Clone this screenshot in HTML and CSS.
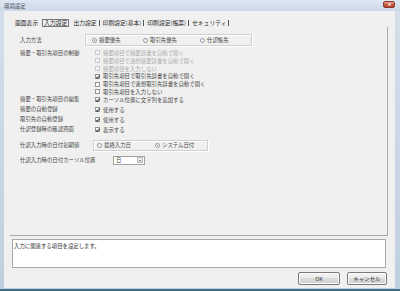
FILE: index.html
```html
<!DOCTYPE html>
<html lang="ja">
<head>
    <meta charset="UTF-8">
    <title>環境設定</title>
    <link rel="stylesheet" href="styles.css">
</head>
<body>
    <div class="window">
        <div class="titlebar">
            <span class="title">環境設定</span>
            <span class="close"></span>
        </div>
        <div class="client">
            <div class="tabs">
                <span class="tab first">画面表示</span>
                <span class="tab active">入力設定</span>
                <span class="tab">出力設定</span>
                <span class="tab">印刷設定(基本)</span>
                <span class="tab">印刷設定(帳票)</span>
                <span class="tab">セキュリティ</span>
            </div>

            <div class="panel">
                <div class="row row-method">
                    <div class="label">入力方法</div>
                    <div class="optbox method">
                        <span class="opt w51"><span class="radio on"></span>摘要優先</span>
                        <span class="opt w57"><span class="radio"></span>取引先優先</span>
                        <span class="opt"><span class="radio"></span>仕訳帳先</span>
                    </div>
                </div>

                <div class="row row-group">
                    <div class="label">摘要・取引先項目の制御</div>
                    <div class="checks">
                        <div class="check disabled"><span class="cb"></span>摘要項目で摘要辞書を自動で開く</div>
                        <div class="check disabled"><span class="cb"></span>摘要項目で連想摘要辞書を自動で開く</div>
                        <div class="check disabled"><span class="cb"></span>摘要項目を入力しない</div>
                        <div class="check"><span class="cb on"></span>取引先項目で取引先辞書を自動で開く</div>
                        <div class="check"><span class="cb"></span>取引先項目で連想取引先辞書を自動で開く</div>
                        <div class="check"><span class="cb"></span>取引先項目を入力しない</div>
                    </div>
                </div>

                <div class="row row-edit">
                    <div class="label">摘要・取引先項目の編集</div>
                    <div class="check single"><span class="cb on"></span>カーソル位置に文字列を追加する</div>
                </div>

                <div class="row row-auto first-auto">
                    <div class="label">摘要の自動登録</div>
                    <div class="check single"><span class="cb on"></span>使用する</div>
                </div>
                <div class="row row-auto">
                    <div class="label">取引先の自動登録</div>
                    <div class="check single"><span class="cb on"></span>使用する</div>
                </div>
                <div class="row row-auto">
                    <div class="label">仕訳登録時の確認画面</div>
                    <div class="check single"><span class="cb on"></span>表示する</div>
                </div>

                <div class="row row-date">
                    <div class="label">仕訳入力時の日付初期値</div>
                    <div class="optbox datebox">
                        <span class="opt w58"><span class="radio"></span>最終入力日</span>
                        <span class="opt"><span class="radio on"></span>システム日付</span>
                    </div>
                </div>

                <div class="row row-cursor">
                    <div class="label">仕訳入力時の日付カーソル位置</div>
                    <div class="select">
                        <span class="select-value">日</span>
                        <span class="select-btn"></span>
                    </div>
                </div>
            </div>

            <div class="desc">入力に関連する項目を設定します。</div>

            <div class="buttons">
                <button class="btn ok">OK</button>
                <button class="btn cancel">キャンセル</button>
            </div>
        </div>
    </div>
</body>
</html>
```

FILE: styles.css
```css
* {
    box-sizing: border-box;
}
body {
    margin: 0;
    width: 400px;
    height: 291px;
    overflow: hidden;
    font-family: "Noto Sans CJK JP", "Noto Sans", sans-serif;
    font-size: 5.4px;
    color: #454545;
    background: #c4d2e1;
}
.window {
    height: 291px;
    display: flex;
    flex-direction: column;
    border-bottom: 2px solid #3d6f80;
    background: linear-gradient(#d4dfeb, #c0cfdf);
}
.titlebar {
    height: 11px;
    flex: none;
    display: flex;
    align-items: center;
    justify-content: space-between;
    padding: 0 5px 0 4px;
    background: linear-gradient(#dfe8f2, #cbd8e6);
}
.title {
    color: #3a4452;
    line-height: 8px;
}
.close {
    position: relative;
    width: 12px;
    height: 7px;
    margin-top: -2px;
    border: 1px solid #8a3b30;
    border-radius: 2px;
    background: linear-gradient(#e9a796, #c85a45 50%, #b8402c);
}
.close::before,
.close::after {
    content: "";
    position: absolute;
    left: 4px;
    top: 2px;
    width: 3px;
    height: 1px;
    background: #fff;
    transform: rotate(35deg);
}
.close::after {
    transform: rotate(-35deg);
}
.client {
    flex: 1;
    margin: 0 5px 1px 4px;
    background: #f0f0f0;
    display: flex;
    flex-direction: column;
}

/* tab strip */
.tabs {
    display: flex;
    align-items: center;
    height: 8px;
    margin-top: 8px;
    padding-left: 11px;
    font-size: 5.8px;
    line-height: 6px;
    color: #2a2a2a;
}
.tab {
    padding: 0 2px 0 3px;
    border-right: 1px solid #555;
    white-space: nowrap;
}
.tab.first {
    padding: 0 4px 0 0;
    border-right: none;
}
.tab.active {
    height: 8px;
    line-height: 6px;
    padding: 0 1px;
    border: 1px solid #777;
    margin-right: 1px;
}

/* settings panel */
.panel {
    height: 209px;
    flex: none;
    margin: 0 7px 0 6px;
    padding: 7px 0 0 10px;
    border-right: 1px solid #a9a9a9;
    border-bottom: 1px solid #a9a9a9;
}
.row {
    display: flex;
    align-items: center;
}
.label {
    width: 65px;
    flex: none;
    white-space: nowrap;
    line-height: 7px;
}
.row-method {
    height: 12px;
}
.optbox {
    display: flex;
    align-items: center;
    border: 1px solid #cfcfcf;
    box-shadow: inset 1px 1px 0 #fff, 1px 1px 0 #fff;
    white-space: nowrap;
}
.optbox.method {
    width: 167px;
    height: 12px;
    padding-left: 6px;
}
.opt {
    display: flex;
    align-items: center;
    line-height: 7px;
}
.w51 { width: 51px; }
.w57 { width: 57px; }
.w58 { width: 58px; }
.radio {
    position: relative;
    width: 5px;
    height: 5px;
    margin-right: 2px;
    border: 1px solid #959595;
    border-radius: 50%;
    background: #fbfbfb;
}
.radio.on::after {
    content: "";
    position: absolute;
    left: 1px;
    top: 1px;
    width: 1.2px;
    height: 1.2px;
    border-radius: 50%;
    background: #4a5670;
}

/* checkboxes */
.row-group {
    align-items: flex-start;
    margin-top: 3px;
}
.row-group .label {
    margin-top: 0.5px;
}
.checks {
    margin-left: 10px;
}
.check {
    display: flex;
    align-items: center;
    height: 7.8px;
    white-space: nowrap;
}
.check.single {
    margin-left: 10px;
}
.check.disabled {
    color: #ababab;
}
.cb {
    position: relative;
    width: 5px;
    height: 5px;
    margin-right: 3px;
    border: 1px solid #959595;
    background: #fbfbfb;
}
.check.disabled .cb {
    border-color: #cacaca;
    background: #f4f4f4;
}
.cb.on::after {
    content: "";
    position: absolute;
    left: 0.8px;
    top: -0.2px;
    width: 1.3px;
    height: 2.5px;
    border-right: 0.8px solid #3a3a3a;
    border-bottom: 0.8px solid #3a3a3a;
    transform: rotate(40deg);
}
.row-edit {
    height: 8px;
}
.row-auto {
    height: 10px;
}
.row-auto.first-auto {
    margin-top: 1px;
}
.row-date {
    height: 11px;
    margin-top: 5px;
}
.optbox.datebox {
    width: 115px;
    height: 11px;
    margin-left: 8px;
    padding-left: 3px;
}
.row-cursor {
    height: 9px;
    margin-top: 5px;
}
.select {
    display: flex;
    align-items: center;
    justify-content: space-between;
    width: 32px;
    height: 9px;
    margin-left: 28px;
    padding: 0 1px 0 2px;
    border: 1px solid #a2a2a2;
    background: #fff;
}
.select-value {
    line-height: 7px;
}
.select-btn {
    position: relative;
    width: 6px;
    height: 6px;
    border: 1px solid #b9b9b9;
    background: linear-gradient(#f6f6f6, #dedede);
}
.select-btn::after {
    content: "";
    position: absolute;
    left: 1px;
    top: 1.5px;
    border-left: 1.5px solid transparent;
    border-right: 1.5px solid transparent;
    border-top: 1.5px solid #222;
}

/* description and buttons */
.desc {
    height: 29px;
    flex: none;
    margin: 3px 9px 0 8px;
    padding: 3px 1px;
    line-height: 6px;
    border: 1px solid #a7a9ad;
    background: #fff;
    color: #333;
}
.buttons {
    display: flex;
    justify-content: flex-end;
    gap: 7px;
    margin: 4px 8px 0 0;
}
.btn {
    height: 13px;
    padding: 0;
    font-family: inherit;
    font-size: 5.4px;
    color: #333;
    border: 1px solid #7a7a7a;
    border-radius: 2px;
    background: linear-gradient(#f4f4f4, #ebebeb 45%, #dcdcdc 50%, #cfcfcf);
    box-shadow: inset 0 0 0 1px #fcfcfc;
}
.btn.ok {
    width: 42px;
}
.btn.cancel {
    width: 40px;
}
```
